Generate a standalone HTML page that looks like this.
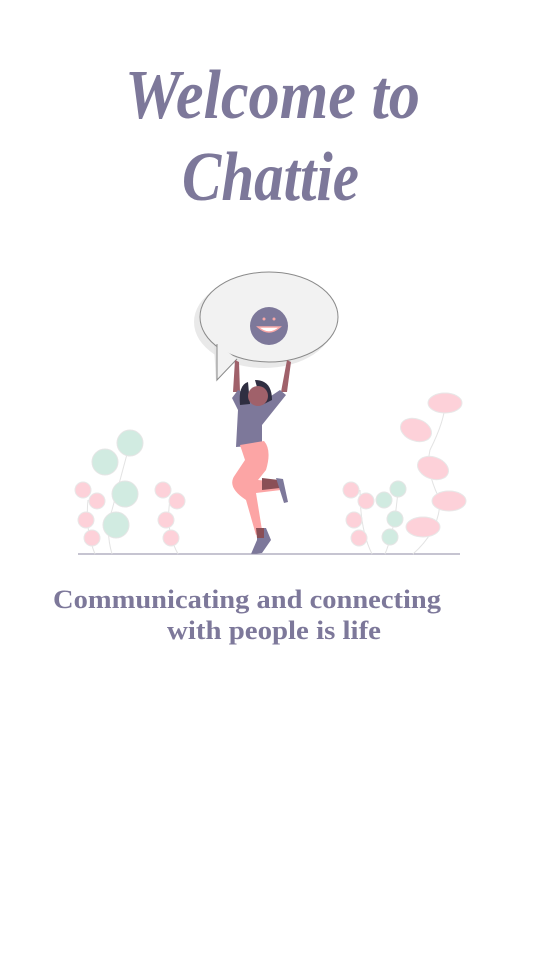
<!DOCTYPE html>
<html><head><meta charset="utf-8"><style>
html,body{margin:0;padding:0;background:#fff;width:540px;height:960px;overflow:hidden}
svg{display:block}
</style></head><body>
<svg width="540" height="960" viewBox="0 0 540 960" xmlns="http://www.w3.org/2000/svg">
<g fill="#7d789a" font-family="Liberation Serif, serif" font-style="italic" font-weight="bold">
<text x="125" y="118" font-size="70" textLength="295" lengthAdjust="spacingAndGlyphs">Welcome to</text>
<text x="182" y="200" font-size="70" textLength="177" lengthAdjust="spacingAndGlyphs">Chattie</text>
</g>
<g fill="#7d789a" font-family="Liberation Serif, serif" font-weight="bold" font-size="26">
<text x="53" y="608" textLength="388" lengthAdjust="spacingAndGlyphs">Communicating and connecting</text>
<text x="167" y="639" textLength="214" lengthAdjust="spacingAndGlyphs">with people is life</text>
</g>
<!-- bubble -->
<ellipse cx="264" cy="322" rx="70" ry="46" fill="#e9e9e9"/>
<path d="M214 345 L216 382 L238 356 Z" fill="#e4e4e4"/>
<ellipse cx="269" cy="317" rx="69" ry="45" fill="#f2f2f2" stroke="#8a8a8a" stroke-width="1"/>
<path d="M217 344 L217 380 L237 359" fill="#f2f2f2" stroke="#8a8a8a" stroke-width="1"/>
<circle cx="269" cy="326" r="19" fill="#7d789a"/>
<circle cx="264" cy="319" r="1.5" fill="#f7a7a7"/><circle cx="274" cy="319" r="1.5" fill="#f7a7a7"/>
<path d="M258 327 Q269 337 280 327 Z" fill="#fff" stroke="#f7a7a7" stroke-width="1.5"/>
<!-- person -->
<path d="M235 360 L233 392 L240 392 L239 362 Z" fill="#a0616a"/>
<path d="M291 362 L287 392 L281 392 L287 360 Z" fill="#a0616a"/>
<path d="M238 390 L232 398 L238 410 L236 447 L262 445 L262 425 L286 395 L280 390 L262 402 Z" fill="#7d789a"/>
<path d="M248 382 Q238 385 240 405 L250 404 Z" fill="#2f2e41"/>
<path d="M255 380 Q272 380 272 400 L262 405 Z" fill="#2f2e41"/>
<circle cx="258" cy="396" r="10" fill="#a0616a"/>
<path d="M240 445 L264 441 Q272 450 266 470 L258 480 L280 482 L281 490 L256 493 L262 530 L256 535 L246 500 Q226 487 235 475 L245 460 Z" fill="#fca5a5"/>
<path d="M262 478 L279 480 L280 488 L262 490 Z" fill="#8a4f56"/>
<path d="M276 478 L283 479 L288 502 L284 503 Z" fill="#7d789a"/>
<path d="M257 528 L266 528 L271 540 L262 553 L251 554 L257 540 Z" fill="#7d789a"/>
<path d="M256 528 L264 528 L264 538 L257 538 Z" fill="#8a4f56"/>
<line x1="78" y1="554" x2="460" y2="554" stroke="#8e8aa3" stroke-width="1"/>
<!-- plants left -->
<g stroke="#e3e3e3" stroke-width="1" fill="none">
<path d="M112 554 Q105 530 112 510 Q120 480 130 443"/>
<path d="M95 554 Q85 530 88 500"/>
<path d="M178 554 Q165 530 170 500"/>
<path d="M372 554 Q360 530 360 490"/>
<path d="M385 554 Q395 530 398 490"/>
<path d="M413 554 Q440 530 440 500 Q425 470 430 450 Q445 420 445 403"/>
</g>
<g fill="#d1ebe1" stroke="#e5e5e5">
<circle cx="130" cy="443" r="13"/><circle cx="105" cy="462" r="13"/><circle cx="125" cy="494" r="13"/><circle cx="116" cy="525" r="13"/>
<circle cx="384" cy="500" r="8"/><circle cx="398" cy="489" r="8"/><circle cx="395" cy="519" r="8"/><circle cx="390" cy="537" r="8"/>
</g>
<g fill="#fdd1d9" stroke="#e8e8e8">
<circle cx="83" cy="490" r="8"/><circle cx="97" cy="501" r="8"/><circle cx="86" cy="520" r="8"/><circle cx="92" cy="538" r="8"/>
<circle cx="163" cy="490" r="8"/><circle cx="177" cy="501" r="8"/><circle cx="166" cy="520" r="8"/><circle cx="171" cy="538" r="8"/>
<circle cx="351" cy="490" r="8"/><circle cx="366" cy="501" r="8"/><circle cx="354" cy="520" r="8"/><circle cx="359" cy="538" r="8"/>
<ellipse cx="445" cy="403" rx="17" ry="10"/><ellipse cx="416" cy="430" rx="16" ry="11" transform="rotate(20 416 430)"/>
<ellipse cx="433" cy="468" rx="16" ry="11" transform="rotate(20 433 468)"/><ellipse cx="449" cy="501" rx="17" ry="10"/>
<ellipse cx="423" cy="527" rx="17" ry="10"/>
</g>
</svg>
</body></html>
